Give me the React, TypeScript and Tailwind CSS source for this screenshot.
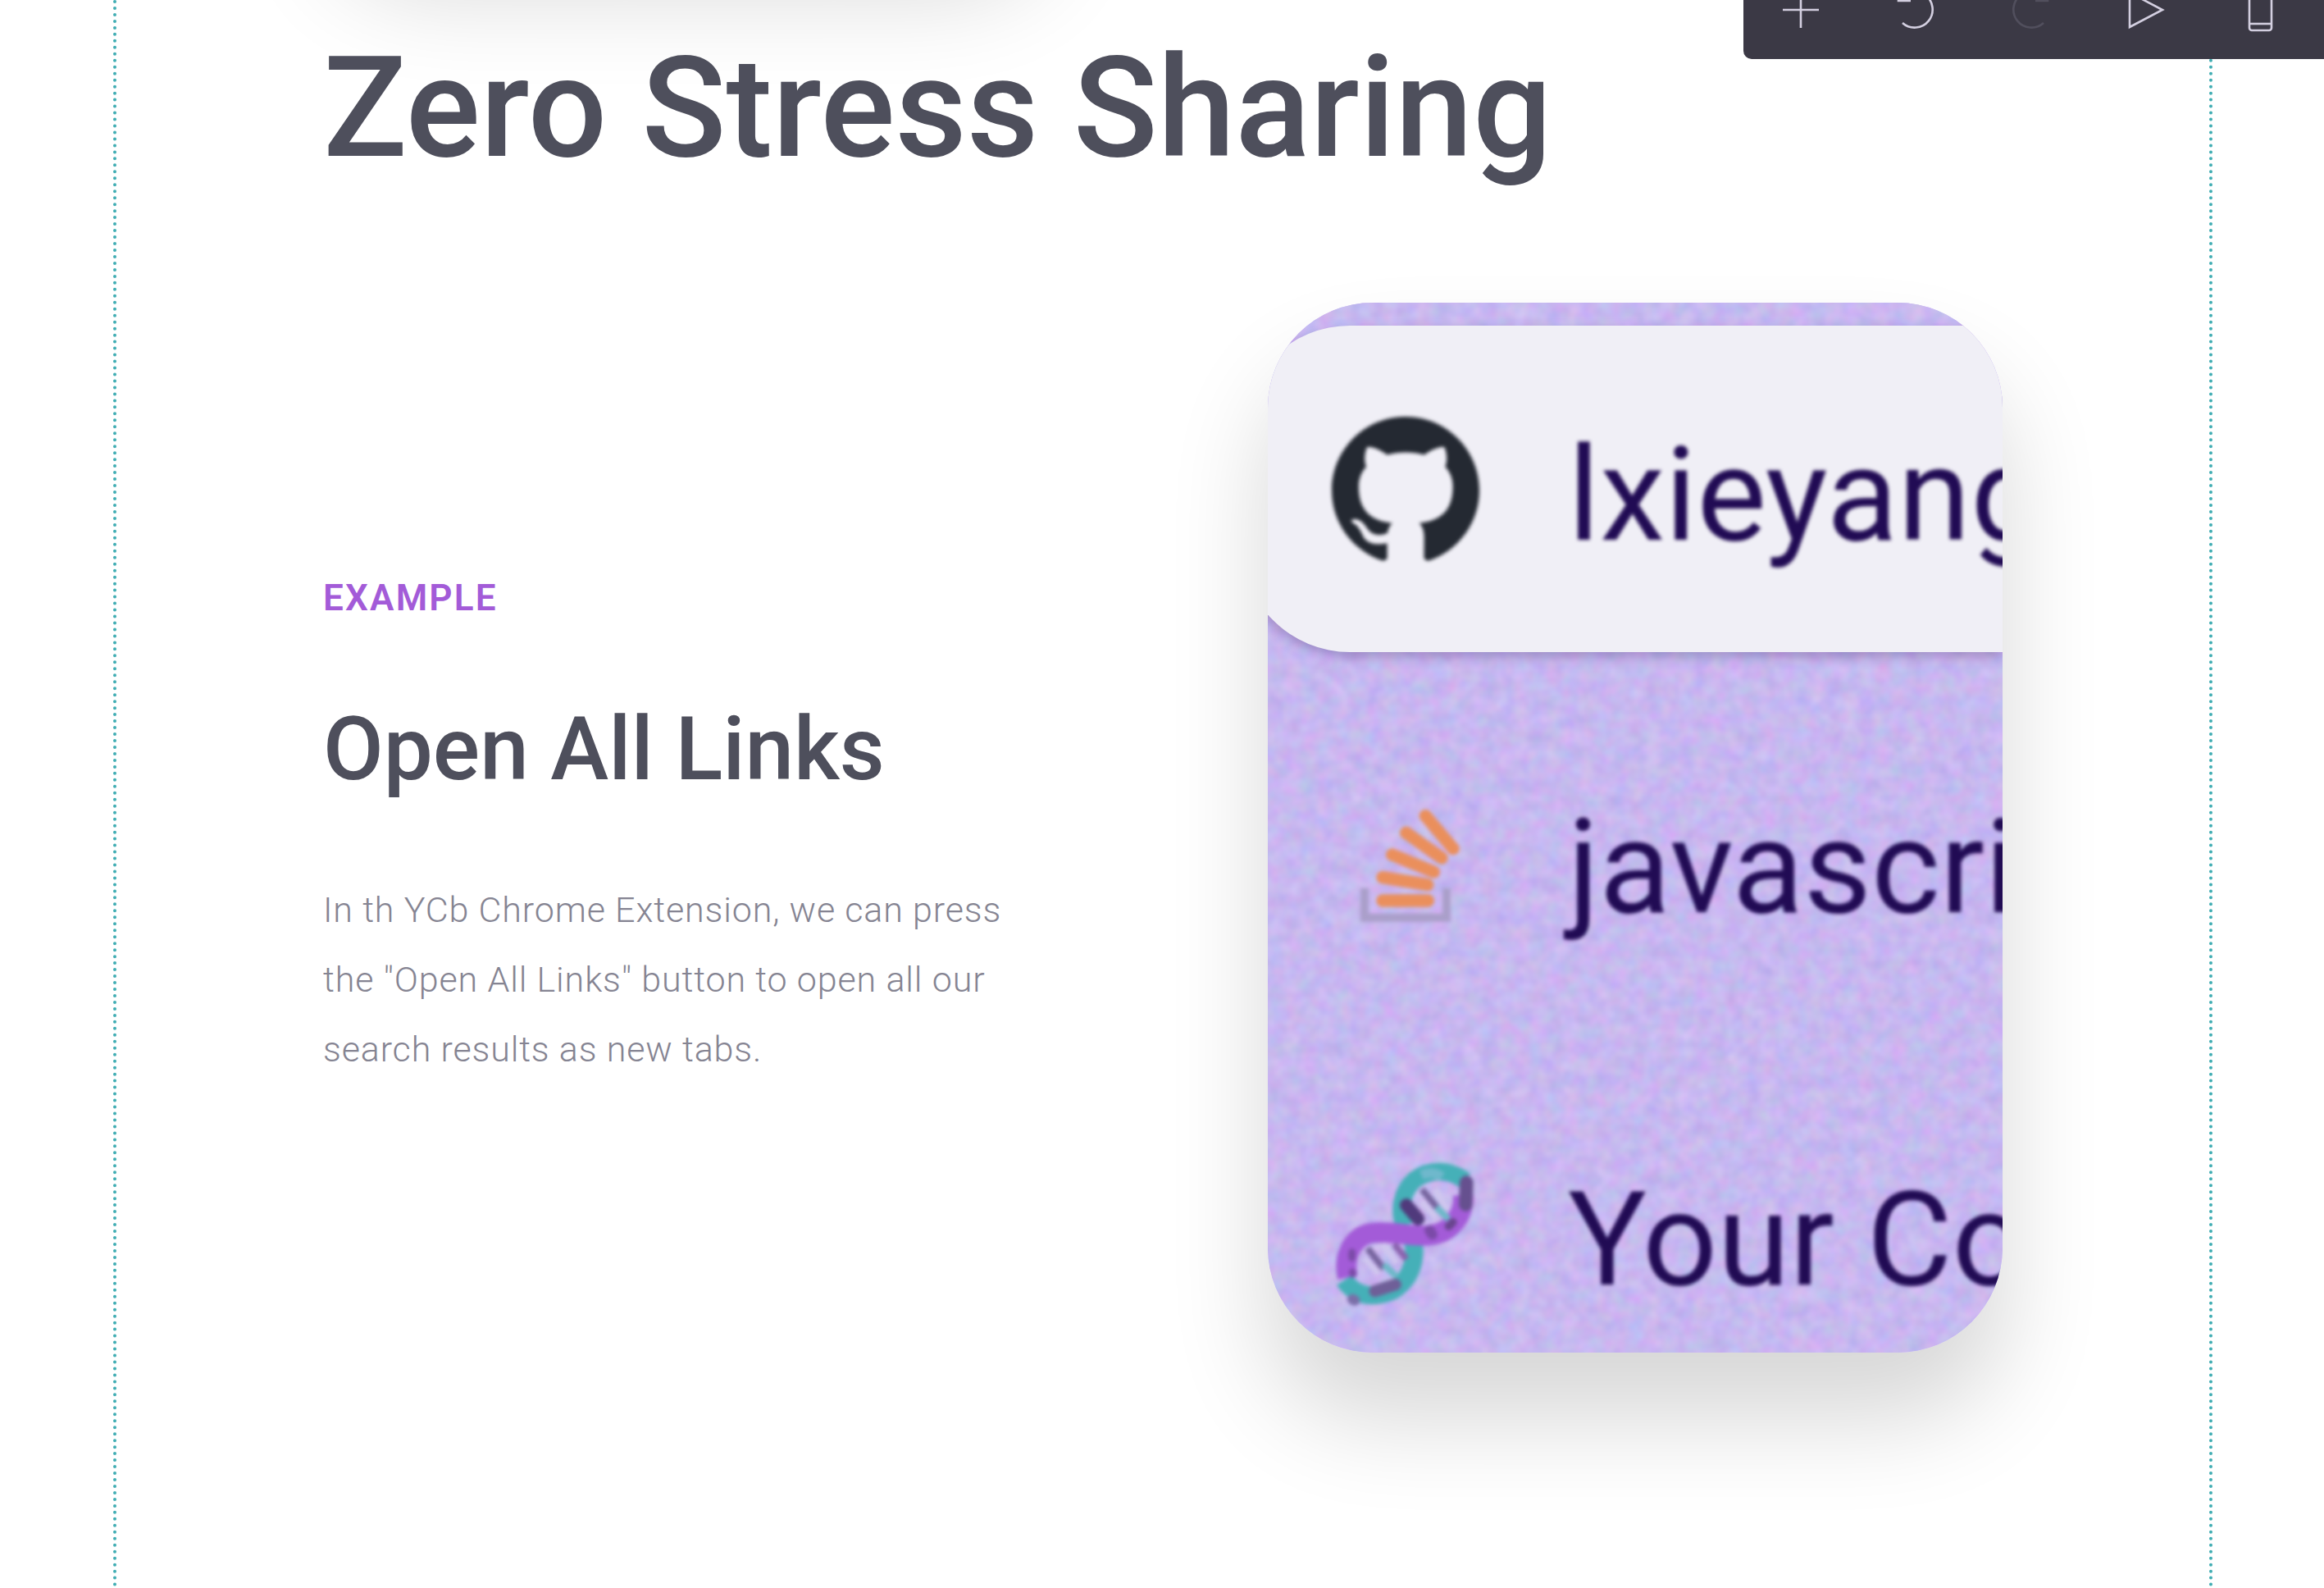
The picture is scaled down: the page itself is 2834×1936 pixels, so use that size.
import type { ReactNode } from "react";

const GithubMark = () => (
  <svg viewBox="0 0 16 16" className="size-[180px] shrink-0 text-[#242932]" fill="currentColor" aria-hidden="true">
    <path d="M8 0C3.58 0 0 3.58 0 8c0 3.54 2.29 6.53 5.47 7.59.4.07.55-.17.55-.38 0-.19-.01-.82-.01-1.49-2.01.37-2.53-.49-2.69-.94-.09-.23-.48-.94-.82-1.13-.28-.15-.68-.52-.01-.53.63-.01 1.08.58 1.23.82.72 1.21 1.87.87 2.33.66.07-.52.28-.87.51-1.07-1.78-.2-3.64-.89-3.64-3.95 0-.87.31-1.59.82-2.15-.08-.2-.36-1.02.08-2.12 0 0 .67-.21 2.2.82.64-.18 1.32-.27 2-.27.68 0 1.36.09 2 .27 1.53-1.04 2.2-.82 2.2-.82.44 1.1.16 1.92.08 2.12.51.56.82 1.27.82 2.15 0 3.07-1.87 3.75-3.65 3.95.29.25.54.73.54 1.48 0 1.07-.01 1.93-.01 2.2 0 .21.15.46.55.38A8.013 8.013 0 0016 8c0-4.42-3.58-8-8-8z" />
  </svg>
);

const StackMark = () => (
  <svg viewBox="-18 0 540 540" className="size-[180px] shrink-0" fill="none" aria-hidden="true">
    <path d="M102 362V470H402V362" stroke="#aa9fca" strokeWidth="30" />
    <g stroke="#ea8f5c" strokeWidth="46" strokeLinecap="round">
      <path d="M168 408H334" />
      <path d="M168 323L332 350" />
      <path d="M203 240L355 303" />
      <path d="M254 160L384 252" />
      <path d="M325 98L426 218" />
    </g>
  </svg>
);

const DnaMark = () => (
  <svg viewBox="72 48 540 540" className="size-[180px] shrink-0" fill="none" aria-hidden="true">
    <path d="M340 285C315 235 325 160 375 115C430 75 500 75 560 118" stroke="#45b0b8" strokeWidth="64" />
    <path d="M400 98C430 85 455 90 475 105" stroke="#6fb8cc" strokeWidth="36" />
    <path d="M370 345C385 420 350 490 295 520C230 550 160 545 118 482" stroke="#45b0b8" strokeWidth="66" />
    <path d="M130 472C112 400 145 320 220 310C290 300 360 325 430 318C510 310 560 240 552 170" stroke="#a35bd8" strokeWidth="74" />
    <path d="M190 400L245 460M258 350L310 420M400 195L455 255M450 150L495 225" stroke="#cfc6ee" strokeWidth="24" />
    <g strokeWidth="24">
      <path d="M203 365L262 440" stroke="#77659f" />
      <path d="M300 350L345 405" stroke="#8a63ae" />
      <path d="M262 425L310 470" stroke="#6db8c8" />
      <path d="M402 150L460 220" stroke="#77659f" />
      <path d="M455 215L500 260" stroke="#6db8c8" />
    </g>
    <g strokeLinecap="round">
      <path d="M565 125L562 205" stroke="#66508f" strokeWidth="50" />
      <path d="M345 208L388 258" stroke="#503a7c" strokeWidth="48" />
      <path d="M500 285L515 270" stroke="#69458f" strokeWidth="30" />
      <path d="M430 300L440 315" stroke="#7b4aa8" strokeWidth="38" />
      <path d="M230 522L305 498" stroke="#6f5f98" strokeWidth="44" />
      <path d="M148 552L156 556" stroke="#7a6fa8" strokeWidth="38" />
      <path d="M146 380L146 400M148 452L150 460" stroke="#7b4aa8" strokeWidth="26" />
    </g>
  </svg>
);

// grainy lilac wallpaper behind the search results
const Grain = () => (
  <svg className="absolute inset-0 h-full w-full" aria-hidden="true">
    <filter id="grain" x="0" y="0" width="100%" height="100%" colorInterpolationFilters="sRGB">
      <feTurbulence type="fractalNoise" baseFrequency="0.05" numOctaves="2" seed="4" />
      <feColorMatrix values="0.16 0 0 0 0.70  0 0.14 0 0 0.65  0 0 0.08 0 0.90  0 0 0 0 1" />
    </filter>
    <rect width="100%" height="100%" filter="url(#grain)" />
  </svg>
);

const results = [
  { title: "lxieyang", icon: <GithubMark />, active: true },
  { title: "javascri", icon: <StackMark />, active: false },
  { title: "Your Co", icon: <DnaMark />, active: false },
];

const ResultRow = ({ title, icon, active }: { title: string; icon: ReactNode; active: boolean }) => (
  <li
    className={
      active
        ? "flex h-[398px] shrink-0 items-center rounded-l-[132px] bg-[#f0eff6] pt-1 pl-[110px] shadow-[0_6px_14px_rgba(80,60,120,0.35)]"
        : "flex h-[398px] shrink-0 items-center pt-1 pl-[110px]"
    }
  >
    <div className="flex items-center gap-[108px] blur-[2px]">
      {icon}
      <span className="pt-3 text-[160px] leading-none whitespace-nowrap text-[#210b54]">{title}</span>
    </div>
  </li>
);

const ToolButton = ({ label, disabled, children }: { label: string; disabled?: boolean; children: ReactNode }) => (
  <button
    type="button"
    aria-label={label}
    disabled={disabled}
    className="flex w-[140px] items-center justify-center text-[#d3cfe0] disabled:text-[#514f5d]"
  >
    <svg viewBox="0 0 64 64" className="size-16" fill="none" stroke="currentColor" strokeWidth="2.6" aria-hidden="true">
      {children}
    </svg>
  </button>
);

const Toolbar = () => (
  <div className="absolute -top-12 right-0 flex h-[120px] rounded-bl-[10px] bg-[#3b3945] pr-2">
    <ToolButton label="Add">
      <path d="M32 10V54M10 32H54" />
    </ToolButton>
    <ToolButton label="Undo">
      <path d="M11 8V21H26M12 20A22 22 0 1 1 16 48" />
    </ToolButton>
    <ToolButton label="Redo" disabled>
      <path d="M53 8V21H38M52 20A22 22 0 1 0 48 48" />
    </ToolButton>
    <ToolButton label="Preview">
      <path d="M13 11V53L53 32Z" />
    </ToolButton>
    <ToolButton label="Mobile view">
      <rect x="19" y="6" width="27" height="51" rx="3" />
      <path d="M19 49H46" />
    </ToolButton>
  </div>
);

export default function App() {
  return (
    <div className="relative min-h-screen overflow-hidden bg-white pr-[136px] pl-[138px] font-[Roboto,sans-serif] text-[#4e4f5c]">
      <main className="relative min-h-screen border-x-4 border-dotted border-[#40adb3] px-[252px] pt-8">
        {/* tail of the card in the section above */}
        <div className="absolute -top-[340px] left-[252px] h-[250px] w-[896px] rounded-[128px] shadow-[0_80px_120px_rgba(0,0,0,0.16)]" />

        <h1 className="relative text-[170px] leading-[200px] font-medium">Zero Stress Sharing</h1>

        <section className="mt-[137px] grid grid-cols-2 items-center gap-64">
          <div className="flex flex-col gap-[89px]">
            <p className="text-[44px] leading-[64px] font-semibold tracking-wider text-[#a35bd8]">EXAMPLE</p>
            <h2 className="text-[107px] leading-[128px] font-medium">Open All Links</h2>
            <p className="max-w-[860px] text-[43px] leading-[85px] font-light tracking-[0.02em] text-[#858492]">
              In th YCb Chrome Extension, we can press the "Open All Links" button to open all our search results as new
              tabs.
            </p>
          </div>

          <div className="aspect-[7/10] rounded-[128px] shadow-[0_80px_120px_rgba(0,0,0,0.16)]">
            <div className="relative h-full overflow-hidden rounded-[128px] bg-[#c9b9f0]">
              <Grain />
              <ul className="relative -ml-8 flex flex-col gap-14 pt-7">
                {results.map((result) => (
                  <ResultRow key={result.title} {...result} />
                ))}
              </ul>
            </div>
          </div>
        </section>
      </main>

      <Toolbar />
    </div>
  );
}
